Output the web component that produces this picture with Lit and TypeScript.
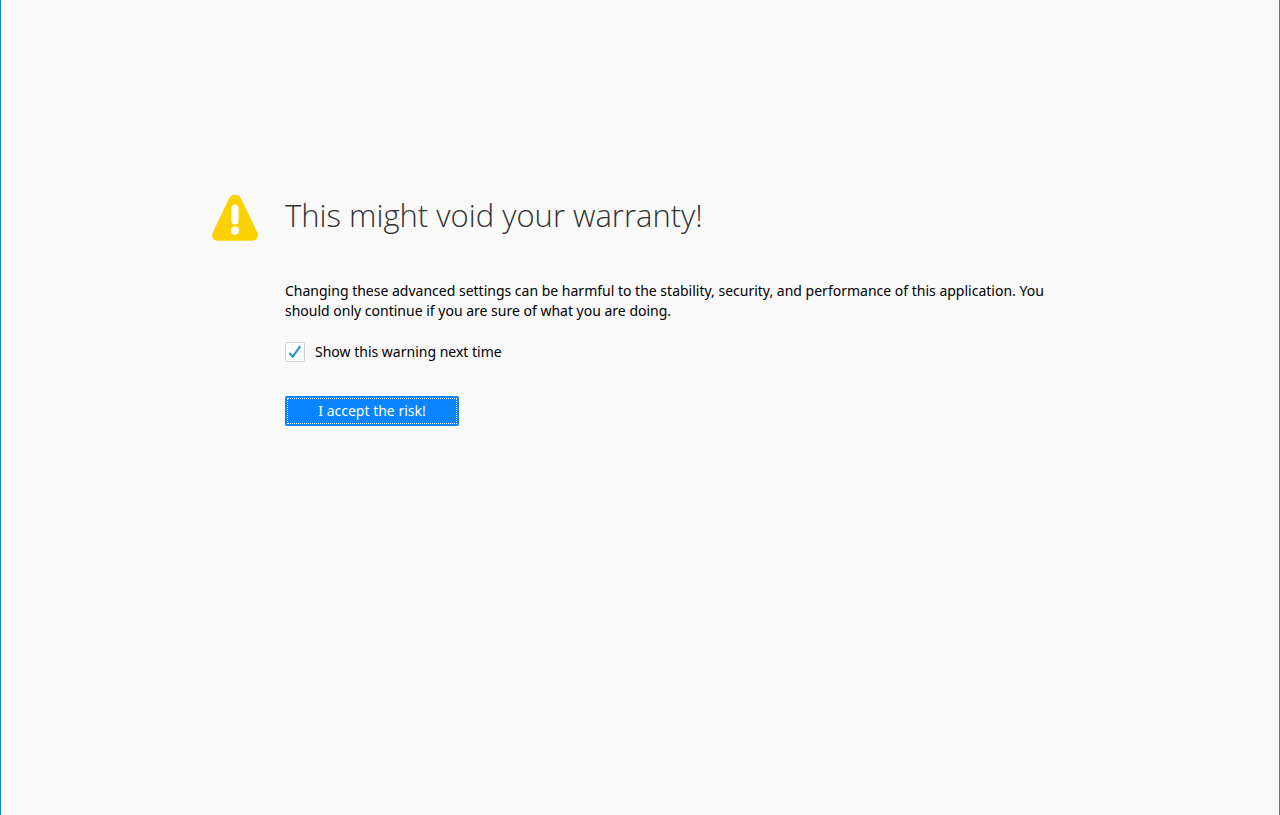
import { LitElement, html, css } from "lit";
import { customElement, state } from "lit/decorators.js";

@customElement("app-root")
export class AppRoot extends LitElement {
  static styles = css`
    :host {
      display: block;
      box-sizing: border-box;
      min-height: 100vh;
      padding: 192px 24px 48px;
      border-left: 1px solid #1883d7;
      border-right: 1px solid #2d7dc0;
      background: #f9f9fa;
      color: #000;
      font: 14px/20px "Noto Sans", "Open Sans", sans-serif;
    }
    .container {
      display: grid;
      grid-template-columns: 48px 1fr;
      column-gap: 25px;
      max-width: 856px;
      margin: 0 auto;
    }
    .icon {
      width: 48px;
      height: 48px;
      margin-top: 2px;
      margin-left: -1px;
    }
    .title {
      margin: 0 0 43px;
      font-family: "Open Sans", "Noto Sans", sans-serif;
      font-size: 31px;
      line-height: 46px;
      font-weight: 300;
      color: #333;
    }
    .text {
      margin: 0;
    }
    .check {
      display: flex;
      align-items: center;
      gap: 10px;
      width: fit-content;
      margin: 21px 0 34px;
    }
    .box {
      appearance: none;
      display: grid;
      place-items: center;
      box-sizing: border-box;
      width: 20px;
      height: 20px;
      margin: 0;
      border: 1px solid #cfcfd0;
      border-radius: 2px;
      background: #fff;
    }
    .mark {
      display: grid;
      align-items: center;
    }
    .mark > * {
      grid-area: 1 / 1;
    }
    .tick {
      width: 20px;
      height: 20px;
      pointer-events: none;
    }
    .box:not(:checked) + .tick {
      visibility: hidden;
    }
    .accept {
      display: block;
      box-sizing: border-box;
      min-width: 174px;
      height: 30px;
      padding: 2px;
      border: 0;
      border-radius: 2px;
      background: #0a84ff;
      color: #fff;
      font: inherit;
    }
    .focus {
      display: block;
      border: 1px dotted #fff;
      line-height: 24px;
    }
  `;

  @state() private showNextTime = true;

  private onToggle(e: Event) {
    this.showNextTime = (e.target as HTMLInputElement).checked;
  }

  render() {
    return html`
      <main class="container">
        <svg class="icon" viewBox="0 0 48 48" aria-hidden="true">
          <path
            fill="#fcd100"
            d="M24 .7c-2.700 0-4.800 1.400-6 3.800L2 37.900C-.2 42.700 2 46.700 6.500 46.700h35c4.500 0 6.700-4 4.500-8.800L30 4.500C28.800 2.100 26.700 .7 24 .7z"
          />
          <rect x="20.500" y="10.500" width="7" height="20" rx="3.500" fill="#fff" />
          <circle cx="24" cy="36.700" r="4.100" fill="#fff" />
        </svg>
        <div>
          <h1 class="title">This might void your warranty!</h1>
          <p class="text">
            Changing these advanced settings can be harmful to the stability,
            security, and performance of this application. You should only
            continue if you are sure of what you are doing.
          </p>
          <div class="check">
            <span class="mark">
              <input
                class="box"
                id="show-warning"
                type="checkbox"
                .checked=${this.showNextTime}
                @change=${this.onToggle}
              />
              <svg class="tick" viewBox="0 0 20 20" aria-hidden="true">
                <path d="M4.300 11l3.500 3.700 7.500-10.500" fill="none" stroke="#2292d0" stroke-width="2" />
              </svg>
            </span>
            <label for="show-warning">Show this warning next time</label>
          </div>
          <button class="accept" type="button">
            <span class="focus">I accept the risk!</span>
          </button>
        </div>
      </main>
    `;
  }
}
